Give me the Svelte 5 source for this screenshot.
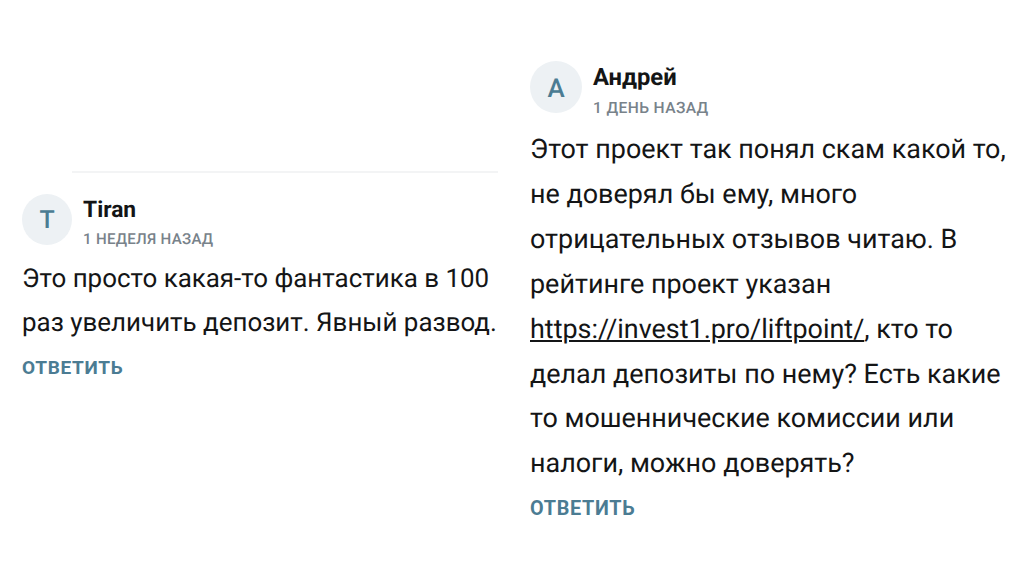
<script>
    const columns = [
        {
            side: 'left',
            name: 'Tiran',
            letter: 'T',
            date: '1 неделя назад',
            lines: [
                [{ text: 'Это просто какая-то фантастика в 100' }],
                [{ text: 'раз увеличить депозит. Явный развод.' }]
            ]
        },
        {
            side: 'right',
            name: 'Андрей',
            letter: 'А',
            date: '1 день назад',
            lines: [
                [{ text: 'Этот проект так понял скам какой то,' }],
                [{ text: 'не доверял бы ему, много' }],
                [{ text: 'отрицательных отзывов читаю. В' }],
                [{ text: 'рейтинге проект указан' }],
                [{ text: 'https://invest1.pro/liftpoint/', link: true }, { text: ', кто то' }],
                [{ text: 'делал депозиты по нему? Есть какие' }],
                [{ text: 'то мошеннические комиссии или' }],
                [{ text: 'налоги, можно доверять?' }]
            ]
        }
    ];
</script>

<main>
    {#each columns as comment}
        <article class={comment.side}>
            <header>
                <div class="avatar">{comment.letter}</div>
                <div class="meta">
                    <h3>{comment.name}</h3>
                    <time>{comment.date}</time>
                </div>
            </header>
            <div class="text">
                {#each comment.lines as line}
                    <p>{#each line as part}{#if part.link}<a href={part.text}>{part.text}</a>{:else}{part.text}{/if}{/each}</p>
                {/each}
            </div>
            <button>Ответить</button>
        </article>
    {/each}
</main>

<style>
    :global(body) {
        margin: 0;
        background: #fff;
    }

    main {
        display: grid;
        grid-template-columns: 498px 506px;
        column-gap: 32px;
        height: 582px;
        box-sizing: border-box;
        overflow: hidden;
        font-family: Roboto, sans-serif;
        color: #141516;
        text-rendering: geometricPrecision;
    }

    article {
        display: flex;
        flex-direction: column;
        align-items: flex-start;
    }

    .left {
        padding: 171px 0 0 22px;
    }

    .left::before {
        content: '';
        align-self: stretch;
        height: 2px;
        margin: 0 0 21px 50px;
        background: #f3f4f5;
    }

    .right {
        padding-top: 61px;
    }

    header {
        display: flex;
        gap: 11px;
        height: 63px;
    }

    .right header {
        height: 66px;
    }

    .avatar {
        display: flex;
        align-items: center;
        justify-content: center;
        width: 50px;
        height: 51px;
        box-sizing: border-box;
        padding-top: 2px;
        border-radius: 50%;
        background: #edf1f4;
        color: #4b7c93;
        font-size: 25px;
        font-weight: 500;
    }

    .right .avatar {
        width: 52px;
        height: 52px;
        padding-top: 3px;
        font-size: 26px;
    }

    .meta {
        display: flex;
        flex-direction: column;
    }

    h3 {
        margin: 0;
        font-size: 22.8px;
        line-height: 32px;
        font-weight: 700;
        white-space: nowrap;
    }

    .right h3 {
        font-size: 23.8px;
        line-height: 33px;
    }

    time {
        font-size: 15.1px;
        line-height: 27px;
        font-weight: 500;
        letter-spacing: 0.28px;
        text-transform: uppercase;
        color: #78828a;
        white-space: nowrap;
    }

    .right time {
        font-size: 15.6px;
        line-height: 28px;
        letter-spacing: 0.38px;
    }

    .text {
        padding-bottom: 1px;
        font-size: 25.93px;
        line-height: 44px;
    }

    .right .text {
        font-size: 26.93px;
        line-height: 44.9px;
    }

    p {
        margin: 0;
        white-space: nowrap;
    }

    a {
        color: inherit;
        text-decoration: underline;
    }

    button {
        padding: 0;
        border: 0;
        background: none;
        color: #4b7c93;
        font-family: inherit;
        font-size: 19px;
        line-height: 44px;
        font-weight: 700;
        letter-spacing: 0.7px;
        text-transform: uppercase;
    }

    .right button {
        font-size: 19.8px;
    }
</style>
